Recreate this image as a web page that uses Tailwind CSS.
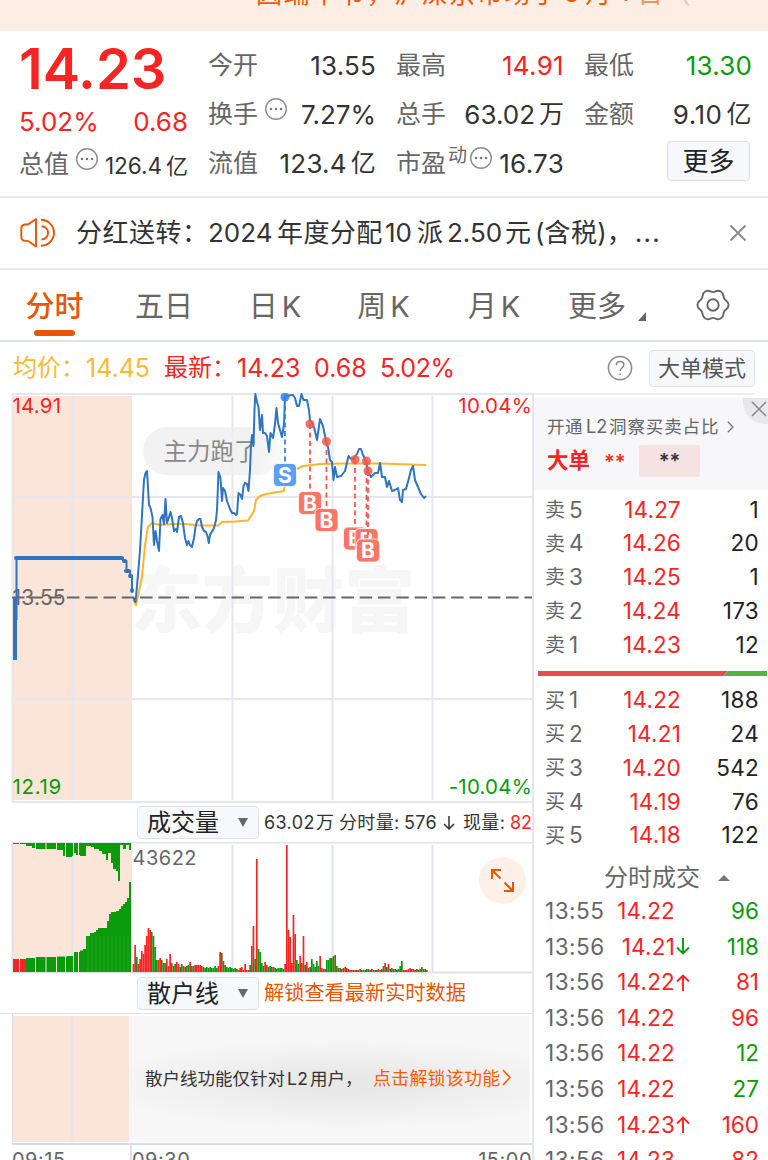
<!DOCTYPE html>
<html lang="zh-CN">

<head>
    <meta charset="UTF-8">
    <meta name="viewport" content="width=device-width, initial-scale=1.0">
    <title>分时行情</title>

    <script src="https://cdn.jsdelivr.net/npm/@tailwindcss/browser@4"></script>
</head>

<body class="bg-white">
<div class="w-[768px] h-[1160px] overflow-hidden flex flex-col font-['Inter','Noto_Sans_CJK_SC',sans-serif] text-[#333] leading-none whitespace-nowrap">

    <!-- Aviso superior -->
    <div class="h-[31px] shrink-0 bg-[#fdeee5] overflow-hidden">
        <div class="-mt-[21px] pl-[256px] text-[26px] leading-[26px] tracking-[1.6px] text-[#f05a00]">因端午节，沪深京市场于<span class="mx-1 align-[1px]">6</span>月<span class="mx-1.5 align-[2px]">1</span><span class="opacity-60">日</span><span class="opacity-30">（</span></div>
    </div>

    <!-- Cotización -->
    <div class="h-[167px] shrink-0 pt-[10px] pl-5 pr-4 grid grid-cols-4 gap-x-5 content-start border-b-2 border-[#ebebef] text-[26px]">
        <div class="text-[#f82424]">
            <div class="h-[56px] flex items-center -ml-px text-[56px] font-semibold">14.23</div>
            <div class="h-[49px] flex items-center justify-between"><span class="-ml-px">5.02%</span><span>0.68</span></div>
            <div class="h-[37px] flex items-center text-[#333]">
                <span class="text-[25px] text-[#666] -ml-px">总值</span>
                <svg class="w-6 h-6 ml-1.5 -mt-3" viewBox="0 0 24 24"><circle cx="12" cy="12" r="10.3" fill="none" stroke="#8c8c8c" stroke-width="1.4"/><g fill="#777"><circle cx="7" cy="12" r="1.3"/><circle cx="12" cy="12" r="1.3"/><circle cx="17" cy="12" r="1.3"/></g></svg>
                <span class="ml-auto pt-1 text-[22.5px] flex gap-1">126.4<span class="text-[22px]">亿</span></span>
            </div>
        </div>
        <div>
            <div class="h-[49px] flex items-center justify-between"><span class="text-[25px] text-[#666]">今开</span><span class="tracking-[0.2px]">13.55</span></div>
            <div class="h-[49px] flex items-center"><span class="text-[25px] text-[#666]">换手</span>
                <svg class="w-6 h-6 ml-1.5 -mt-3" viewBox="0 0 24 24"><circle cx="12" cy="12" r="10.3" fill="none" stroke="#8c8c8c" stroke-width="1.4"/><g fill="#777"><circle cx="7" cy="12" r="1.3"/><circle cx="12" cy="12" r="1.3"/><circle cx="17" cy="12" r="1.3"/></g></svg>
                <span class="ml-auto">7.27%</span></div>
            <div class="h-[49px] flex items-center justify-between"><span class="text-[25px] text-[#666]">流值</span><span class="flex gap-1 tracking-[0.2px]">123.4<span class="text-[25px]">亿</span></span></div>
        </div>
        <div>
            <div class="h-[49px] flex items-center justify-between"><span class="text-[25px] text-[#666]">最高</span><span class="text-[#f82424] tracking-[0.3px]">14.91</span></div>
            <div class="h-[49px] flex items-center justify-between"><span class="text-[25px] text-[#666]">总手</span><span class="flex gap-1">63.02<span class="text-[25px]">万</span></span></div>
            <div class="h-[49px] flex items-center"><span class="text-[25px] text-[#666]">市盈</span><span class="ml-0.5 -mt-4 text-[19px] text-[#666]">动</span>
                <svg class="w-6 h-6 ml-0.5 -mt-3" viewBox="0 0 24 24"><circle cx="12" cy="12" r="10.3" fill="none" stroke="#8c8c8c" stroke-width="1.4"/><g fill="#777"><circle cx="7" cy="12" r="1.3"/><circle cx="12" cy="12" r="1.3"/><circle cx="17" cy="12" r="1.3"/></g></svg>
                <span class="ml-auto tracking-[0.3px]">16.73</span></div>
        </div>
        <div>
            <div class="h-[49px] flex items-center justify-between"><span class="text-[25px] text-[#666]">最低</span><span class="text-[#0a9b0a] tracking-[0.2px]">13.30</span></div>
            <div class="h-[49px] flex items-center justify-between"><span class="text-[25px] text-[#666]">金额</span><span class="flex gap-1 tracking-[0.5px]">9.10<span class="text-[25px]">亿</span></span></div>
            <div class="pt-[2px] pr-0.5 flex justify-end"><div class="w-[83px] h-10 rounded border border-[#d9dee6] bg-[#f7f8fb] flex items-center justify-center pt-0.5 text-[26px] text-[#222]">更多</div></div>
        </div>
    </div>

    <!-- Noticia -->
    <div class="h-[72px] shrink-0 flex items-center pl-5 pr-[21px] border-b-2 border-[#ebebef] text-[26px]">
        <svg class="w-[35px] h-[30px]" viewBox="0 0 35 30" fill="none" stroke="#ea5504" stroke-width="1.9" stroke-linejoin="round"><path d="M16 1v27.600L9 23.500q-1-.6-2.500-.6H5q-3.500-.3-3.700-3.700v-9q.2-3.400 3.700-3.700h1.500q1.500 0 2.500-.6z"/><path d="M21.500 8.200a6.600 6.600 0 0 1 0 13.200M21 1.800a13 13 0 0 1 0 26"/></svg>
        <div class="ml-[21px] flex"><span class="w-[132px] tracking-[0.5px]">分红送转：</span><span class="w-[69px]">2024</span><span class="w-[108px] tracking-[0.4px]">年度分配</span><span class="w-[32px]">10</span><span class="w-[30px]">派</span><span class="w-[58px]">2.50</span><span class="w-[30px]">元</span><span>(</span><span class="tracking-[0.4px]">含税</span><span>)</span><span class="w-[28px]">，</span><span class="tracking-[1.2px]">...</span></div>
        <svg class="w-[18px] h-[18px] ml-auto" viewBox="0 0 18 18" stroke="#888" stroke-width="1.8"><path d="M1.5 1.5l15 15M16.5 1.5l-15 15"/></svg>
    </div>

    <!-- Pestañas -->
    <div class="h-[72px] shrink-0 flex items-center border-b-2 border-[#dfe2ea] text-[29px] text-[#666]">
        <div class="w-[109px] h-full flex flex-col items-center text-[#ea5504] font-medium"><span class="mt-[22px]">分时</span><div class="mt-[9px] w-[41px] h-1.5 rounded-full bg-[#ea5504]"></div></div>
        <div class="w-[110px] pt-0.5 text-center">五日</div>
        <div class="w-[112px] pt-0.5 text-center">日<span class="ml-1">K</span></div>
        <div class="w-[105px] pt-0.5 text-center">周<span class="ml-1">K</span></div>
        <div class="w-[116px] pt-0.5 text-center">月<span class="ml-1">K</span></div>
        <div class="w-[92px] pt-0.5 pl-4">更多</div>
        <svg class="w-2 h-[9px] mt-[22px] ml-[-6px]" viewBox="0 0 8 9" fill="#666"><path d="M8 0v9H0z"/></svg>
        <svg class="w-9 h-9 ml-[49px]" viewBox="-18 -18 36 36" fill="none" stroke="#666" stroke-width="1.9"><path d="M15.600 0C15.600 4.200 12.500 4.200 11.200 6.450C9.900 8.700 11.400 11.400 7.800 13.500C4.200 15.600 2.600 12.900 0 12.900C-2.600 12.900-4.200 15.600-7.800 13.500C-11.400 11.400-9.900 8.700-11.200 6.450C-12.500 4.200-15.600 4.200-15.600 0C-15.600-4.200-12.500-4.200-11.200-6.450C-9.900-8.700-11.400-11.400-7.800-13.500C-4.200-15.600-2.600-12.900 0-12.900C2.600-12.900 4.200-15.600 7.800-13.500C11.400-11.400 9.900-8.700 11.200-6.450C12.500-4.200 15.600-4.200 15.600 0Z"/><circle r="5.7"/></svg>
    </div>

    <!-- Precio medio y último -->
    <div class="h-[51px] shrink-0 flex items-center pl-[13px] pr-[13px] pt-px text-[25px] text-[#f82424]">
        <span class="w-[73px] text-[24px] text-[#ffb833]">均价：</span><span class="w-[78px] text-[#ffb833]">14.45</span>
        <span class="w-[73px] text-[24px]">最新：</span><span class="w-[77px]">14.23</span><span class="w-[66px]">0.68</span><span class="tracking-[-0.4px]">5.02%</span>
        <svg class="w-[26px] h-[26px] ml-auto mr-4" viewBox="0 0 26 26" fill="none" stroke="#888" stroke-width="1.5"><circle cx="13" cy="13" r="11.6"/><path d="M9.3 10.4c0-2.2 1.600-3.800 3.800-3.800s3.700 1.500 3.700 3.400c0 2.700-3.600 2.900-3.600 6.100"/><circle cx="13.1" cy="19.3" r=".6" fill="#888" stroke-width=".8"/></svg>
        <div class="w-[106px] h-[37px] rounded border border-[#dfe2ea] bg-[#f7f8fb] flex items-center justify-center text-[22px] text-[#555]">大单模式</div>
    </div>

    <div class="flex grow">
        <div class="w-[534px] shrink-0 flex flex-col border-r-2 border-[#e4e5ee]">

            <!-- Gráfico de precio -->
            <svg class="w-[532px] h-[410px] shrink-0" viewBox="0 393 532 410">
                <rect x="13" y="396" width="119" height="404" fill="#fbe5d8"/>
                <text x="131" y="626" font-size="71" font-weight="900" fill="#f6f6f7" font-family="'Noto Sans CJK SC',sans-serif">东方财富</text>
                <g stroke="#e5e6ef" stroke-width="2">
                    <path d="M12 394h520M12 802h520M12 497h520M12 699h520M12.5 394v408"/>
                    <path d="M72.5 396v404M232.5 396v404M332.5 396v404M432.5 396v404"/>
                </g>
                <defs>
                    <linearGradient id="fade"><stop offset=".75" stop-color="#eeeeee"/><stop offset="1" stop-color="#f7f7f7"/></linearGradient>
                </defs>
                <rect x="143" y="427" width="138" height="48" rx="24" fill="url(#fade)" opacity=".8"/>
                <text x="163.500" y="460" font-size="23.5" fill="#888" font-family="'Noto Sans CJK SC',sans-serif">主力跑了</text>
                <path d="M12 597.5h520" stroke="#666" stroke-width="1.8" stroke-dasharray="12.5 5.8"/>
                <g font-size="20.500" letter-spacing=".2">
                    <text x="12.500" y="413" fill="#f82424">14.91</text>
                    <text x="532" y="413" fill="#f82424" text-anchor="end">10.04%</text>
                    <text x="12.500" y="605" fill="#666" font-size="21">13.55</text>
                    <text x="12.500" y="794" fill="#0a9b0a" letter-spacing=".7">12.19</text>
                    <text x="532" y="794" fill="#0a9b0a" text-anchor="end">-10.04%</text>
                </g>
                <g fill="none" stroke="#2f74c0" stroke-linejoin="round">
                    <path d="M15 660V597" stroke-width="4"/>
                    <path d="M16.5 620V558H122" stroke-width="2"/>
                    <path d="M16 558H122L124 561H126.500V571H130V576H132V591" stroke-width="2"/>
                    <path d="M16 558H122M124 561h1M126 571h3M130 576h1M132 590v1" stroke-width="4" stroke-linecap="round"/>
                </g>
                <polyline fill="none" stroke="#ffb52b" stroke-width="2" stroke-linejoin="round" points="133,600 136,605 142,577 145,545 148,527 152,523 160,525 172,524 185,524 200,525.500 218,525.500 222,522 235,521.500 248,520.500 251,516 254,511 256,500 260,496 266,494 275,492.500 284,491 286,478 290,473 293,470 297,469 303,466 320,464 345,463.500 380,463.500 426,465"/>
                <polyline fill="none" stroke="#2f74c0" stroke-width="2" stroke-linejoin="round" points="133,597 135.500,602 138,575 140,550 142,515 144,480 145.500,473 147,471 149,505 150.500,508 152.500,517 154,545 155.500,531 157,541 159,551 160.500,519 162.500,515 164,524 165.500,499 167,523 169,517 170.500,512 172,518 174,531 176,529 177,532 179,517 181,516 183,523 185,538 187,545 188.500,541 190,545 192,547 194,538 195.500,527 197,521 199,519 200.500,519 202,527 204,531 206,532 208,538 208.800,543 210,535 214,528 216,520 217,510 218.500,472 220.500,478 222,501 223,488 225,491 227,501 230,509 232,513 234,513 236,515 237,514 238.500,493 240.500,495 242,499 243.500,486 245,483 247,484 248.500,491 250,470 251,445 252,435 253.500,446 254.500,410 255.300,394 257,402 258.500,407 260,430 262,415 263,433 265,433 267,436 269,452 270.500,433 273,438 275,424 276.500,408 278,423 280,430 282,437 284,424 285,396 293,395 295,398 297,406 299,406 301.500,394 303.500,400 307,400 309,410 310,420 314,427 317,440 320,419 323,426 326,441 328,447 330,460 332,462 333.500,480 335,467 337,477 341,476 345,471 348.500,456 350,458 353,459 357,454 359,449 361,449 363,455 366,461 368,471 371,477 375,473 378,473 380,463 382,477 385,477 387,487 389,481 392,491 395,490 398,488 400,500 402,502 403,490 406,489 409,478 411,470 413,466 415,480 418,487 421,494 424,498 426,496"/>
                <g id="marks"></g>
            </svg>

            <!-- Selector de volumen -->
            <div class="h-[39px] shrink-0 pl-[137px] flex items-center">
                <div class="w-[122px] h-[33px] rounded border border-[#dfe2ea] bg-[#f7f8fb] flex items-center pl-[9px] text-[24px] text-[#222]">成交量<svg class="w-[10px] h-[9px] ml-[19px]" viewBox="0 0 10 9" fill="#666"><path d="M0 0h10L5 9z"/></svg></div>
                <div class="ml-[5px] flex items-center text-[18px] tracking-[0.4px]"><span class="w-[52px]">63.02</span><span class="w-[23px]">万</span><span class="w-[65px]">分时量:</span><span class="w-[39px]">576</span>
                    <svg class="w-[12px] h-[14px] mr-2" viewBox="0 0 12 14" fill="none" stroke="#333" stroke-width="1.5"><path d="M6 0v13M1 8l5 5 5-5"/></svg>
                    <span class="w-[47px]">现量:</span><span class="text-[#f82424] tracking-normal">82</span></div>
            </div>

            <svg class="w-[532px] h-[132px] shrink-0" viewBox="0 842 532 132">
                <rect x="13" y="843" width="119" height="129" fill="#fbe5d8"/>
                <path d="M12 842.500h520M12 972.500h520M12.500 842v130M72.500 845v127M232.500 845v127M332.500 845v127M432.500 845v127" stroke="#e0e2ec" stroke-width="2"/>
                <text x="132.500" y="865" font-size="20" letter-spacing=".5" fill="#666">43622</text>
                <g id="auction"></g>
                <g id="volume"></g>
                <circle cx="502.500" cy="880.500" r="23.500" fill="#fff0e7"/>
                <path d="M492 879v-9h9M492 870l8.500 8.500M513 882v9h-9M513 891l-8.500-8.500" fill="none" stroke="#ea5504" stroke-width="2"/>
            </svg>

            <!-- Selector de minoristas -->
            <div class="h-[40px] shrink-0 pl-[137px] flex items-center border-b border-[#dfe2ea]">
                <div class="w-[122px] h-[33px] rounded border border-[#dfe2ea] bg-[#f7f8fb] flex items-center pl-[9px] text-[24px] text-[#222]">散户线<svg class="w-[10px] h-[9px] ml-[19px]" viewBox="0 0 10 9" fill="#666"><path d="M0 0h10L5 9z"/></svg></div>
                <div class="ml-[5px] text-[20.2px] text-[#ea5504]">解锁查看最新实时数据</div>
            </div>

            <div class="h-[131px] shrink-0 ml-3 pt-[2px] pb-px pr-[2px] border-l border-b-2 border-[#d8dce6] flex">
                <div class="w-[60px] bg-[#fbe5d8] border-r-2 border-[#e5e6ef]"></div>
                <div class="w-[56px] bg-[#fbe5d8]"></div>
                <div class="grow flex items-center pl-4 text-[17.5px] bg-[#f7f7f7] bg-[radial-gradient(ellipse_62%_36%_at_54%_54%,#e8e8e8_20%,#f7f7f7_100%)]">
                    <span>散户线功能仅针对</span><span class="w-[25px] pl-0.5 tracking-[0.3px]">L2</span><span class="w-[63px]">用户，</span>
                    <span class="text-[18px] tracking-[0.2px] text-[#ff5a00]">点击解锁该功能</span>
                    <svg class="w-[9px] h-[17px] -mt-1 ml-0.5" viewBox="0 0 9 17" fill="none" stroke="#ff5a00" stroke-width="1.6"><path d="M1 1l7 7.500-7 7.500"/></svg>
                </div>
            </div>
            <div class="h-[15px] shrink-0 ml-3 flex text-[20px] tracking-[0.5px] text-[#666] leading-5">
                <span class="w-[120px] pt-[5px] border-r-2 border-[#e0e2ec]">09:15</span><span class="pt-[5px]">09:30</span><span class="pt-[5px] ml-auto">15:00</span>
            </div>
        </div>

        <!-- Libro de órdenes -->
        <div class="w-[234px] shrink-0 flex flex-col">
            <div class="w-[221px] h-[2px] shrink-0 bg-[#ececf1]"></div>
            <div class="mt-[3px] h-[92px] shrink-0 bg-[#f7f7f9] relative pl-[13px] pt-[19px]">
                <div class="absolute right-0 top-0 w-[25px] h-[26px] rounded-bl-[22px] bg-[#e8e8ea]">
                    <svg class="absolute left-2 top-[3px] w-4 h-4" viewBox="0 0 16 16" stroke="#888" stroke-width="1.500"><path d="M1 1l14 14M15 1L1 15"/></svg>
                </div>
                <div class="h-[19px] flex items-center text-[17.5px] text-[#666]"><span class="w-[39px] tracking-[0.4px]">开通</span><span class="w-[23px] text-[18px]">L2</span><span class="tracking-[0.9px]">洞察买卖占比</span>
                    <svg class="w-[7px] h-[12px] ml-[8px]" viewBox="0 0 7 12" fill="none" stroke="#777" stroke-width="1.300"><path d="M.8.8L6 6 .8 11.200"/></svg>
                </div>
                <div class="mt-[9px] flex items-center text-[21.5px] font-bold text-[#f82424]"><span class="w-[57px]">大单</span><span class="w-[35px] text-[20px] pt-0.5 font-semibold">**</span>
                    <div class="w-[61px] h-[32px] rounded-xs bg-[#f6e1e3] flex items-center justify-center text-[20px] font-semibold text-[#333]">**</div>
                </div>
            </div>
            <div id="asks" class="mt-[3px]"></div>
            <svg class="w-[229px] h-[5px] ml-1 mt-[9px] shrink-0" viewBox="0 0 229 5"><path d="M0 0h190l-5 5H0z" fill="#e64b50"/><path d="M190 0h39v5h-44z" fill="#55b440"/></svg>
            <div id="bids" class="mt-[8px]"></div>
            <div class="h-[41px] pt-[9px] flex items-center pl-[70px] text-[24px] text-[#666]">分时成交<svg class="w-3 h-1.5 ml-[18px]" viewBox="0 0 12 6" fill="#777"><path d="M6 0l6 6H0z"/></svg></div>
            <div id="trades"></div>
        </div>
    </div>
</div>

<script>
    const RED = '#f82424';
    const GREEN = '#0a9b0a';

    const asks = [['5', '14.27', 1], ['4', '14.26', 20], ['3', '14.25', 1], ['2', '14.24', 173], ['1', '14.23', 12]];
    const bids = [['1', '14.22', 188], ['2', '14.21', 24], ['3', '14.20', 542], ['4', '14.19', 76], ['5', '14.18', 122]];

    function levels(side, rows) {
        return rows.map(([n, price, qty]) => `
            <div class="h-[33.75px] flex items-center pl-[11px] pr-[9px] text-[22.5px]">
                <span class="w-6 text-[20px] text-[#666]">${side}</span><span class="text-[#666]">${n}</span>
                <span class="ml-auto w-[70px] text-right text-[#f82424] tracking-[0.2px]">${price}</span>
                <span class="w-[78px] text-right text-[#222] tracking-[0.3px]">${qty}</span>
            </div>`).join('');
    }

    document.querySelector('#asks').innerHTML = levels('卖', asks);
    document.querySelector('#bids').innerHTML = levels('买', bids);

    const arrows = {
        up: '<svg class="w-[14px] h-[17px]" viewBox="0 0 14 17" fill="none" stroke="#f82424" stroke-width="1.9"><path d="M7 17V1.500M1 7.500l6-6 6 6"/></svg>',
        down: '<svg class="w-[14px] h-[17px]" viewBox="0 0 14 17" fill="none" stroke="#0a9b0a" stroke-width="1.9"><path d="M7 0v15.500M1 9.500l6 6 6-6"/></svg>'
    };

    const trades = [
        ['13:55', '14.22', '', 96, 'g'], ['13:56', '14.21', 'down', 118, 'g'], ['13:56', '14.22', 'up', 81, 'r'],
        ['13:56', '14.22', '', 96, 'r'], ['13:56', '14.22', '', 12, 'g'], ['13:56', '14.22', '', 27, 'g'],
        ['13:56', '14.23', 'up', 160, 'r'], ['13:56', '14.23', '', 82, 'r']
    ];

    document.querySelector('#trades').innerHTML = trades.map(([time, price, dir, qty, c]) => `
        <div class="h-[35.6px] flex items-center pl-[11px] pr-[9px] text-[22.5px]">
            <span class="w-[60px] text-[#666] tracking-[0.5px]">${time}</span>
            <span class="w-[70px] text-right text-[#f82424] tracking-[0.2px]">${price}</span>
            <span class="w-4 flex justify-center">${arrows[dir] || ''}</span>
            <span class="ml-auto ${c === 'g' ? 'text-[#0a9b0a]' : 'text-[#f82424]'}">${qty}</span>
        </div>`).join('');

    // puntos de compra y venta: x, y del precio, y de la etiqueta
    const marks = [['S', 285, 397, 475], ['B', 310, 424, 503], ['B', 326.5, 441.5, 520], ['B', 355, 459.5, 538.5], ['B', 366.5, 461, 540], ['B', 368, 471, 550.5]];
    document.querySelector('#marks').innerHTML = marks.map(([t, x, y, by]) => {
        const fill = t === 'S' ? '#5b9ff8' : '#fd7565';
        const line = t === 'S' ? '#2f80ee' : '#f5584a';
        return `
            <path d="M${x} ${y}V${by - 10}" stroke="${line}" stroke-width="1.8" stroke-dasharray="5 3.5"/>
            <circle cx="${x}" cy="${y}" r="4.5" fill="${line}" opacity=".85"/>
            <rect x="${x - 11.5}" y="${by - 11.5}" width="23" height="23" rx="4.5" fill="${fill}" stroke="#fff" stroke-width=".8"/>
            <text x="${x}" y="${by + 7.5}" font-size="21" font-weight="700" fill="#fff" text-anchor="middle">${t}</text>`;
    }).join('');

    // subasta de apertura: [x, alto] hasta el siguiente tramo
    const low = [[13, 13], [26, 14], [36, 15], [56, 15.5], [67, 16], [73, 20], [80, 21.5], [83, 23], [86, 36], [90, 39], [94, 40], [96, 42], [98, 44], [107, 51], [109, 58], [111, 60], [116, 61], [119, 63], [121, 66], [123, 68], [125, 70], [127, 74], [129, 90], [131, 0]];
    const high = [[13, 1], [26, 3], [32, 5], [36, 6], [56, 7], [63, 13], [66, 14], [72, 13], [74, 10], [76, 12], [80, 13], [86, 3], [91, 4], [94, 6], [99, 8], [102, 11], [106, 17], [108, 10], [111, 20], [113, 26], [116, 28], [118, 38], [120, 2], [123, 6], [126, 2], [129, 7], [131, 0]];
    const step = (list, y, dir) => list.slice(0, -1).map(([x, h], i) =>
        `<rect x="${x}" y="${dir > 0 ? y : y - h}" width="${list[i + 1][0] - x}" height="${h}" fill="${x < 26 ? RED : GREEN}"/>`).join('');
    document.querySelector('#auction').innerHTML = step(low, 972, -1) + step(high, 843, 1)
        + [19.5, 35.5, 46, 56.5, 65.5, 73.5, 78.5].map(x => `<path d="M${x} 948v24M${x} 843v15" stroke="#fbe5d8"/>`).join('')
        + [88, 92, 96, 100, 104, 108, 112, 116, 120, 124, 128].map(x => `<path d="M${x} 936v36" stroke="#4fb54a" stroke-width=".4"/>`).join('');

    // volumen por minuto, r sube / g baja
    const volume = 'r8 r27 g15 r8 r13 r21 r18 r27 r36 r44 r42 g40 g36 g25 g12 r12 r14 g12 g9 g9 r13 r6 r18 r9 g6 g8 r10 r8 g5 g8 '
        + 'r6 r5 g6 g7 r10 g6 g6 r7 r7 r7 r7 r6 g5 g4 g5 g4 g5 g4 g4 g6 g4 r6 r20 g19 r11 g7 g5 g4 g5 g4 '
        + 'g3 g4 g3 r2 r4 r5 r2 r8 r2 r2 g7 r26 r46 g13 r113 g23 g20 g9 g6 r10 r7 g5 g6 r5 r5 g4 g3 g4 g4 g4 g3 r8 '
        + 'r127 r42 r35 r9 r57 r38 g12 g8 r16 r9 r36 g7 r10 r4 g5 g13 g8 g5 g11 g6 r16 r4 r3 r3 g12 g12 g14 g14 r16 g17 '
        + 'g6 r4 g4 r3 g4 r5 r4 r3 r2 r2 g2 r2 r2 g2 r3 r2 g2 g2 g3 g3 r2 r3 r2 g2 g2 r3 r2 g3 g6 r9 g5 r8 g3 g4 g3 r3 g2 g3 g6 g11 '
        + 'r2 r2 r2 r3 r4 r3 g3 r2 g3 r2 g3 g5 r3 g3 r2';
    document.querySelector('#volume').innerHTML = volume.split(' ').map((v, i) =>
        `<rect x="${(132.6 + i * 1.667).toFixed(2)}" y="${972 - v.slice(1)}" width="1.7" height="${v.slice(1)}" fill="${v[0] === 'r' ? RED : GREEN}"/>`).join('');
</script>
</body>

</html>
